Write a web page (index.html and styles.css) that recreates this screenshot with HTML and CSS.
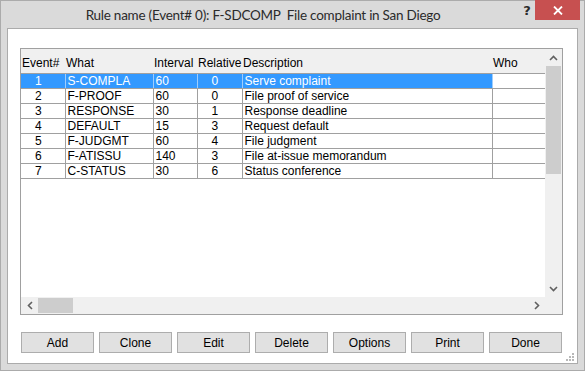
FILE: index.html
```html
<!DOCTYPE html>
<html lang="en">
<head>
    <meta charset="UTF-8">
    <title>Rule name</title>
    <link rel="stylesheet" href="styles.css">
</head>
<body>
    <div class="window">
        <div class="titlebar">
            <div class="title">Rule name (Event# 0): F-SDCOMP&nbsp; File complaint in San Diego</div>
            <div class="help">?</div>
            <div class="close">
                <svg width="10" height="9" viewBox="0 0 10 9"><path d="M1 0.5 L9 8.5 M9 0.5 L1 8.5" stroke="#fff" stroke-width="1.8"/></svg>
            </div>
        </div>

        <div class="client">
            <div class="listview">
                <div class="grid-area">
                    <table class="events">
                        <colgroup>
                            <col style="width:44px">
                            <col style="width:88px">
                            <col style="width:44px">
                            <col style="width:45px">
                            <col style="width:250px">
                            <col style="width:53px">
                        </colgroup>
                        <thead>
                            <tr>
                                <th>Event#</th>
                                <th>What</th>
                                <th>Interval</th>
                                <th>Relative</th>
                                <th>Description</th>
                                <th>Who</th>
                            </tr>
                        </thead>
                        <tbody>
                            <tr class="selected">
                                <td class="num">1</td><td>S-COMPLA</td><td>60</td><td class="rel">0</td><td>Serve complaint</td><td class="who"></td>
                            </tr>
                            <tr>
                                <td class="num">2</td><td>F-PROOF</td><td>60</td><td class="rel">0</td><td>File proof of service</td><td class="who"></td>
                            </tr>
                            <tr>
                                <td class="num">3</td><td>RESPONSE</td><td>30</td><td class="rel">1</td><td>Response deadline</td><td class="who"></td>
                            </tr>
                            <tr>
                                <td class="num">4</td><td>DEFAULT</td><td>15</td><td class="rel">3</td><td>Request default</td><td class="who"></td>
                            </tr>
                            <tr>
                                <td class="num">5</td><td>F-JUDGMT</td><td>60</td><td class="rel">4</td><td>File judgment</td><td class="who"></td>
                            </tr>
                            <tr>
                                <td class="num">6</td><td>F-ATISSU</td><td>140</td><td class="rel">3</td><td>File at-issue memorandum</td><td class="who"></td>
                            </tr>
                            <tr>
                                <td class="num">7</td><td>C-STATUS</td><td>30</td><td class="rel">6</td><td>Status conference</td><td class="who"></td>
                            </tr>
                        </tbody>
                    </table>
                </div>

                <div class="vscroll">
                    <div class="arrow">
                        <svg width="9" height="6" viewBox="0 0 9 6"><path d="M1 5 L4.5 1.5 L8 5" fill="none" stroke="#606060" stroke-width="1.6"/></svg>
                    </div>
                    <div class="vthumb"></div>
                    <div class="vtrack"></div>
                    <div class="arrow">
                        <svg width="9" height="6" viewBox="0 0 9 6"><path d="M1 1 L4.5 4.5 L8 1" fill="none" stroke="#606060" stroke-width="1.6"/></svg>
                    </div>
                </div>

                <div class="hscroll">
                    <div class="arrow">
                        <svg width="6" height="9" viewBox="0 0 6 9"><path d="M5 1 L1.5 4.5 L5 8" fill="none" stroke="#606060" stroke-width="1.6"/></svg>
                    </div>
                    <div class="hthumb"></div>
                    <div class="htrack"></div>
                    <div class="arrow">
                        <svg width="6" height="9" viewBox="0 0 6 9"><path d="M1 1 L4.5 4.5 L1 8" fill="none" stroke="#606060" stroke-width="1.6"/></svg>
                    </div>
                </div>

                <div class="corner"></div>
            </div>

            <div class="buttons">
                <button>Add</button>
                <button>Clone</button>
                <button>Edit</button>
                <button>Delete</button>
                <button>Options</button>
                <button>Print</button>
                <button>Done</button>
            </div>

            <svg class="grip" width="10" height="10" viewBox="0 0 10 10">
                <rect x="7" y="1" width="2" height="2" fill="#b8b8b8"/>
                <rect x="4" y="4" width="2" height="2" fill="#b8b8b8"/>
                <rect x="7" y="4" width="2" height="2" fill="#b8b8b8"/>
                <rect x="1" y="7" width="2" height="2" fill="#b8b8b8"/>
                <rect x="4" y="7" width="2" height="2" fill="#b8b8b8"/>
                <rect x="7" y="7" width="2" height="2" fill="#b8b8b8"/>
            </svg>
        </div>
    </div>
</body>
</html>
```

FILE: styles.css
```css
* {
    margin: 0;
    padding: 0;
    box-sizing: border-box;
}

body {
    font-family: "Liberation Sans", Arial, sans-serif;
    font-size: 12px;
    color: #000;
    background-color: #dadada;
}

/* Window frame */
.window {
    width: 585px;
    height: 371px;
    border: 1px solid #ababab;
    background-color: #dadada;
    display: flex;
    flex-direction: column;
}

.titlebar {
    height: 27px;
    display: flex;
    align-items: flex-start;
}

.title {
    flex: 1;
    padding-left: 6px;
    padding-top: 6px;
    text-align: center;
    font-family: Lato, "Noto Sans", sans-serif;
    font-size: 13.5px;
    letter-spacing: -0.25px;
    color: #2b2b2b;
}

.help {
    width: 16px;
    padding-top: 2px;
    text-align: center;
    font-family: "DejaVu Sans", sans-serif;
    font-weight: bold;
    font-size: 13px;
    color: #2b2b2b;
}

.close {
    width: 45px;
    height: 20px;
    margin-top: -1px;
    margin-right: 4px;
    background-color: #c75050;
    display: flex;
    justify-content: center;
    align-items: center;
}

/* Client area */
.client {
    position: relative;
    flex: 1;
    margin: 0 6px 6px;
    background-color: #fff;
    border: 1px solid #ababab;
    padding: 19px 0 0 12px;
}

.listview {
    width: 543px;
    height: 267px;
    border: 1px solid #a0a0a0;
    display: grid;
    grid-template-columns: 524px 17px;
    grid-template-rows: 248px 17px;
}

.grid-area {
    overflow: hidden;
    background-color: #fff;
}

.events {
    width: 524px;
    border-collapse: collapse;
    table-layout: fixed;
}

.events th {
    height: 24px;
    background-color: #f0f0f0;
    font-weight: normal;
    text-align: left;
    padding: 4px 0 0 1px;
    white-space: nowrap;
    overflow: hidden;
    border-bottom: 1px solid #a0a0a0;
}

.events td {
    height: 15px;
    padding: 0 0 0 2px;
    line-height: 14px;
    white-space: nowrap;
    overflow: hidden;
    border-right: 1px solid #a0a0a0;
    border-bottom: 1px solid #a0a0a0;
}

.events td.num {
    padding-left: 14px;
}

.events td.rel {
    padding-left: 14px;
}

.events td.who {
    border-right: none;
}

.events tr.selected td {
    background-color: #3399ff;
    color: #fff;
    border-right-color: #9fcdfc;
}

.events tr.selected td.who {
    background-color: #fff;
}

/* Scrollbars */
.vscroll {
    display: flex;
    flex-direction: column;
    background-color: #f0f0f0;
}

.vscroll .arrow {
    height: 17px;
    display: flex;
    justify-content: center;
    align-items: center;
}

.vthumb {
    height: 108px;
    margin: 0 1px;
    background-color: #cdcdcd;
}

.vtrack {
    flex: 1;
}

.hscroll {
    display: flex;
    background-color: #f0f0f0;
}

.hscroll .arrow {
    width: 17px;
    display: flex;
    justify-content: center;
    align-items: center;
}

.hthumb {
    width: 35px;
    margin: 1px 0;
    background-color: #cdcdcd;
}

.htrack {
    flex: 1;
}

.corner {
    background-color: #f0f0f0;
}

/* Buttons */
.buttons {
    display: flex;
    gap: 5px;
    margin: 17px 0 0 1px;
}

button {
    width: 73px;
    height: 21px;
    font-family: "Liberation Sans", Arial, sans-serif;
    font-size: 12px;
    color: #000;
    background-color: #e1e1e1;
    border: 1px solid #adadad;
}

.grip {
    position: absolute;
    right: 2px;
    bottom: 1px;
}
```
